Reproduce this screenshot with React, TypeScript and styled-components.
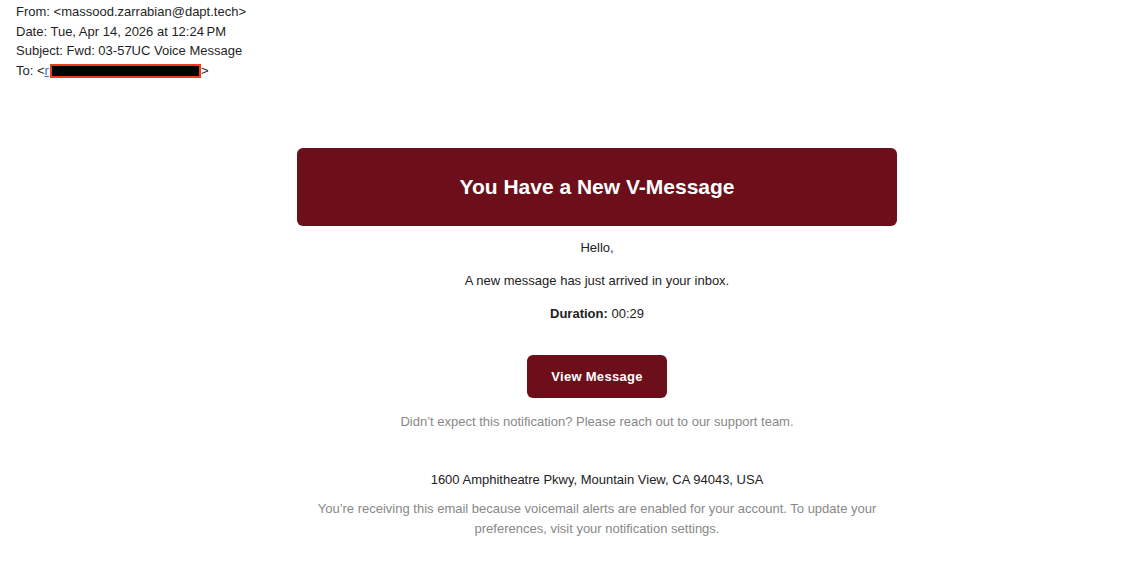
import React from 'react';
import styled, { createGlobalStyle } from 'styled-components';

const GlobalStyle = createGlobalStyle`
  html, body {
    margin: 0;
    padding: 0;
    background: #ffffff;
    font-family: "Liberation Sans", Arial, Helvetica, sans-serif;
    color: #222222;
  }
`;

const MailHeader = styled.div`
  padding: 2px 16px 0;
  font-size: 13px;
  line-height: 19.7px;
  color: #1f1f1f;
`;

const HeaderLine = styled.div`
  white-space: nowrap;
`;

const RecipientLink = styled.span`
  color: #3b6fd8;
  text-decoration: underline;
`;

const Redaction = styled.span`
  display: inline-block;
  width: 147px;
  height: 10px;
  margin-left: 1px;
  vertical-align: -3px;
  background: #000000;
  border: 2px solid #f03a1c;
`;

const Main = styled.div`
  display: flex;
  justify-content: center;
  padding: 67px 0 40px 65px;
`;

const Column = styled.div`
  width: 600px;
  display: flex;
  flex-direction: column;
  align-items: center;
  text-align: center;
`;

const Banner = styled.div`
  width: 100%;
  height: 78px;
  box-sizing: border-box;
  display: flex;
  align-items: center;
  justify-content: center;
  background: #6c0f1b;
  border-radius: 6px;
  color: #ffffff;
  font-size: 21px;
  font-weight: 700;
`;

const Text = styled.p<{ $top?: number; $muted?: boolean }>`
  margin: ${(p) => p.$top ?? 13}px 0 0;
  font-size: 13px;
  line-height: 20px;
  color: ${(p) => (p.$muted ? '#888888' : '#222222')};
`;

const Button = styled.a`
  margin-top: 31px;
  width: 140px;
  height: 43px;
  display: flex;
  align-items: center;
  justify-content: center;
  background: #6c0f1b;
  border-radius: 6px;
  color: #ffffff;
  font-size: 13px;
  font-weight: 700;
  letter-spacing: 0.3px;
  text-decoration: none;
`;

const Footer = styled.p`
  margin: 9px 0 0;
  max-width: 570px;
  font-size: 13px;
  line-height: 20px;
  color: #888888;
`;

export default function App() {
  return (
    <>
      <GlobalStyle />
      <MailHeader>
        <HeaderLine>From: &lt;massood.zarrabian@dapt.tech&gt;</HeaderLine>
        <HeaderLine>Date: Tue, Apr 14, 2026 at 12:24&#8239;PM</HeaderLine>
        <HeaderLine>Subject: Fwd: 03-57UC Voice Message</HeaderLine>
        <HeaderLine>
          To: &lt;<RecipientLink>r<Redaction /></RecipientLink>&gt;
        </HeaderLine>
      </MailHeader>
      <Main>
        <Column>
          <Banner>You Have a New V-Message</Banner>
          <Text $top={12}>Hello,</Text>
          <Text>A new message has just arrived in your inbox.</Text>
          <Text>
            <strong>Duration:</strong> 00:29
          </Text>
          <Button href="#">View Message</Button>
          <Text $top={14} $muted>
            Didn’t expect this notification? Please reach out to our support team.
          </Text>
          <Text $top={38}>1600 Amphitheatre Pkwy, Mountain View, CA 94043, USA</Text>
          <Footer>
            You’re receiving this email because voicemail alerts are enabled for your account. To
            update your preferences, visit your notification settings.
          </Footer>
        </Column>
      </Main>
    </>
  );
}
